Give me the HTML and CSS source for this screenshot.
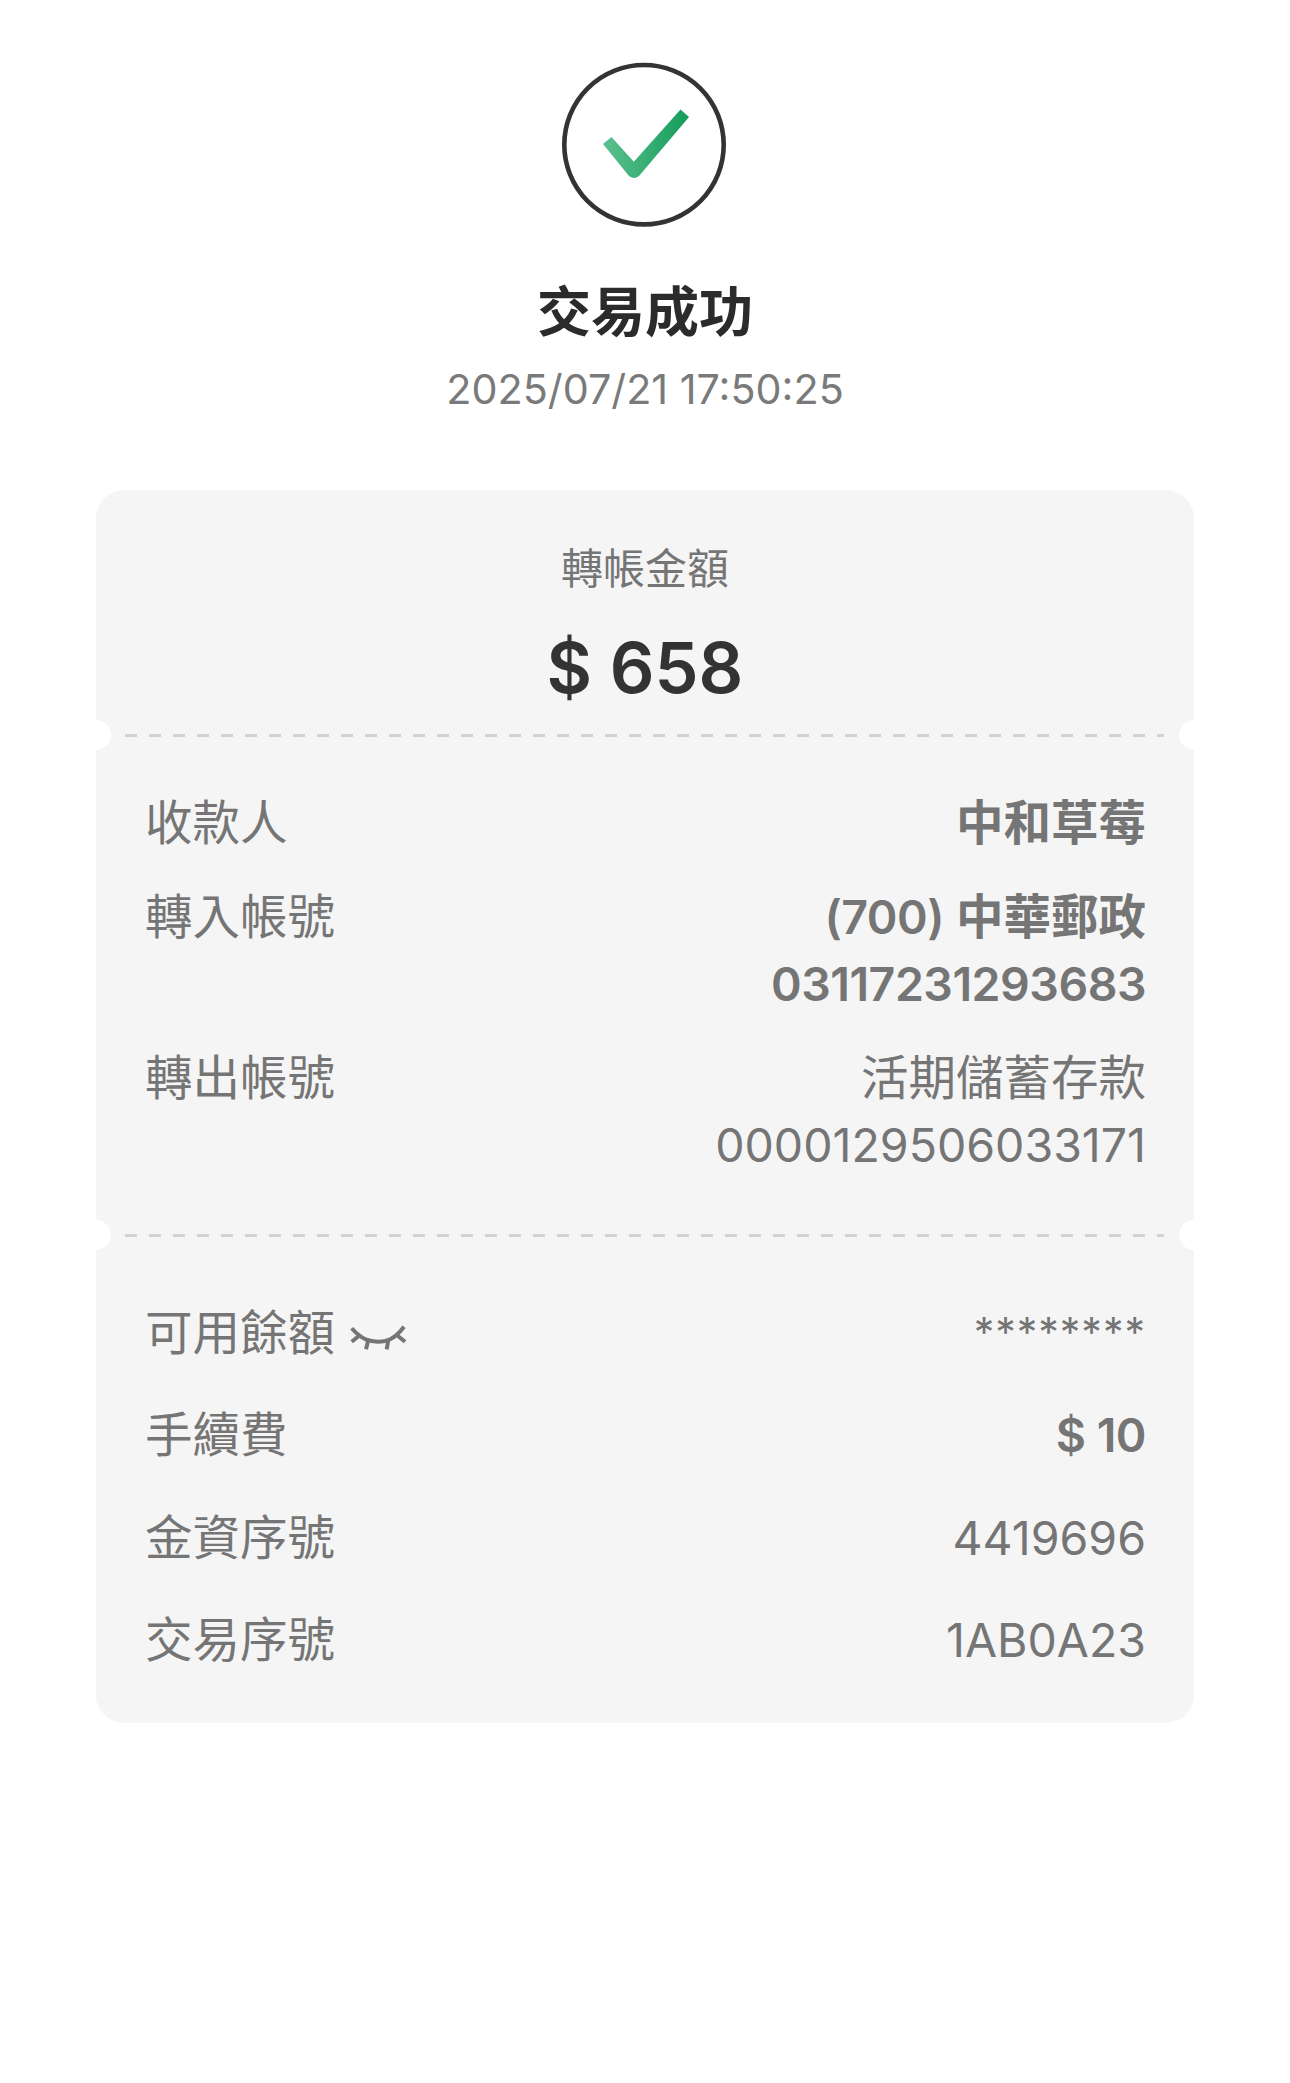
FILE: index.html
```html
<!DOCTYPE html>
<html lang="zh-Hant">
<head>
    <meta charset="UTF-8">
    <meta name="viewport" content="width=device-width, initial-scale=1.0">
    <title>交易成功</title>
    <link rel="stylesheet" href="styles.css">
</head>
<body>
    <div class="status">
        <svg class="status-icon" viewBox="0 0 168 168" width="168" height="168">
            <defs>
                <linearGradient id="checkGrad" x1="0" y1="0" x2="1" y2="0">
                    <stop offset="0" stop-color="#5cc08f"/>
                    <stop offset="1" stop-color="#159c5b"/>
                </linearGradient>
            </defs>
            <circle cx="84" cy="84.7" r="79.7" fill="none" stroke="#333333" stroke-width="4.6"/>
            <path d="M43 84 L51.5 77 L73.8 101.7 L120.5 49.5 L129 57 L79 116 Q74 120 69 116 Z" fill="url(#checkGrad)"/>
        </svg>
        <h1 class="status-title">交易成功</h1>
        <div class="status-time">2025/07/21 17:50:25</div>
    </div>

    <div class="receipt">
        <div class="amount">
            <div class="amount-label">轉帳金額</div>
            <div class="amount-value">$ 658</div>
        </div>

        <div class="divider"></div>

        <div class="details">
            <div class="row">
                <div class="label">收款人</div>
                <div class="value strong">中和草莓</div>
            </div>
            <div class="row">
                <div class="label">轉入帳號</div>
                <div class="value strong"><span class="num">(700)</span> 中華郵政<br><span class="num">03117231293683</span></div>
            </div>
            <div class="row">
                <div class="label">轉出帳號</div>
                <div class="value">活期儲蓄存款<br><span class="num">0000129506033171</span></div>
            </div>
        </div>

        <div class="divider"></div>

        <div class="summary">
            <div class="row">
                <div class="label">可用餘額
                    <svg class="eye" viewBox="0 0 60 30" width="60" height="30">
                        <path d="M3.7 5.3 C14 17 22 18.7 30 18.7 S46 17 56 3.7" fill="none" stroke="#757575" stroke-width="4"/>
                        <path d="M12 12 L3.7 18.7 M20.3 17 L18 26.3 M40.3 17 L38.7 26.3 M48.7 12 L57 18.7" fill="none" stroke="#757575" stroke-width="4"/>
                    </svg>
                </div>
                <div class="value masked">********</div>
            </div>
            <div class="row">
                <div class="label">手續費</div>
                <div class="value strong"><span class="num">$ 10</span></div>
            </div>
            <div class="row">
                <div class="label">金資序號</div>
                <div class="value"><span class="num">4419696</span></div>
            </div>
            <div class="row">
                <div class="label">交易序號</div>
                <div class="value"><span class="num">1AB0A23</span></div>
            </div>
        </div>
    </div>
</body>
</html>
```

FILE: styles.css
```css
body {
    margin: 0;
    background: #ffffff;
    font-family: Inter, "Noto Sans CJK TC", sans-serif;
    color: #757575;
}
.status {
    display: flex;
    flex-direction: column;
    align-items: center;
    padding-top: 60px;
}
.status-icon {
    display: block;
    margin-right: 3px;
}
.status-title {
    margin: 47px 0 0;
    font-size: 54px;
    line-height: 76px;
    font-weight: 700;
    color: #2b2b2b;
}
.status-time {
    margin-top: 10px;
    font-size: 41.3px;
    line-height: 56px;
    color: #7a7a7a;
}
.receipt {
    margin: 73px 96px 0;
    background: #f5f5f5;
    border-radius: 28px;
}
.amount {
    height: 244px;
    padding-top: 50px;
    box-sizing: border-box;
    text-align: center;
}
.amount-label {
    font-size: 42px;
    line-height: 58px;
}
.amount-value {
    margin-top: 28px;
    font-size: 70px;
    line-height: 84px;
    font-weight: 600;
    color: #333333;
}
.divider {
    position: relative;
    height: 3px;
    margin: 0 30px 0 29px;
    background: repeating-linear-gradient(to right, #d2d2d2 0, #d2d2d2 12px, transparent 12px, transparent 24px);
}
.divider::before,
.divider::after {
    content: "";
    position: absolute;
    top: -14px;
    width: 30px;
    height: 30px;
    border-radius: 50%;
    background: #ffffff;
}
.divider::before {
    left: -44px;
}
.divider::after {
    right: -45px;
}
.details {
    height: 497px;
    padding: 52px 48px 0 49px;
    box-sizing: border-box;
}
.summary {
    padding: 62px 48px 50px 49px;
}
.row {
    display: flex;
    justify-content: space-between;
    align-items: flex-start;
    font-size: 47.5px;
    line-height: 67px;
}
.details .row + .row {
    margin-top: 27px;
}
.summary .row + .row {
    margin-top: 35.3px;
}
.label {
    display: flex;
    align-items: center;
    gap: 13px;
}
.value {
    text-align: right;
}
.num {
    font-size: 46.5px;
    line-height: 1;
}
.strong {
    font-weight: 600;
}
.strong .num {
    letter-spacing: -0.5px;
}
.masked {
    font-size: 41px;
    letter-spacing: 1px;
}
.eye {
    display: block;
    margin-top: 11px;
}
```
